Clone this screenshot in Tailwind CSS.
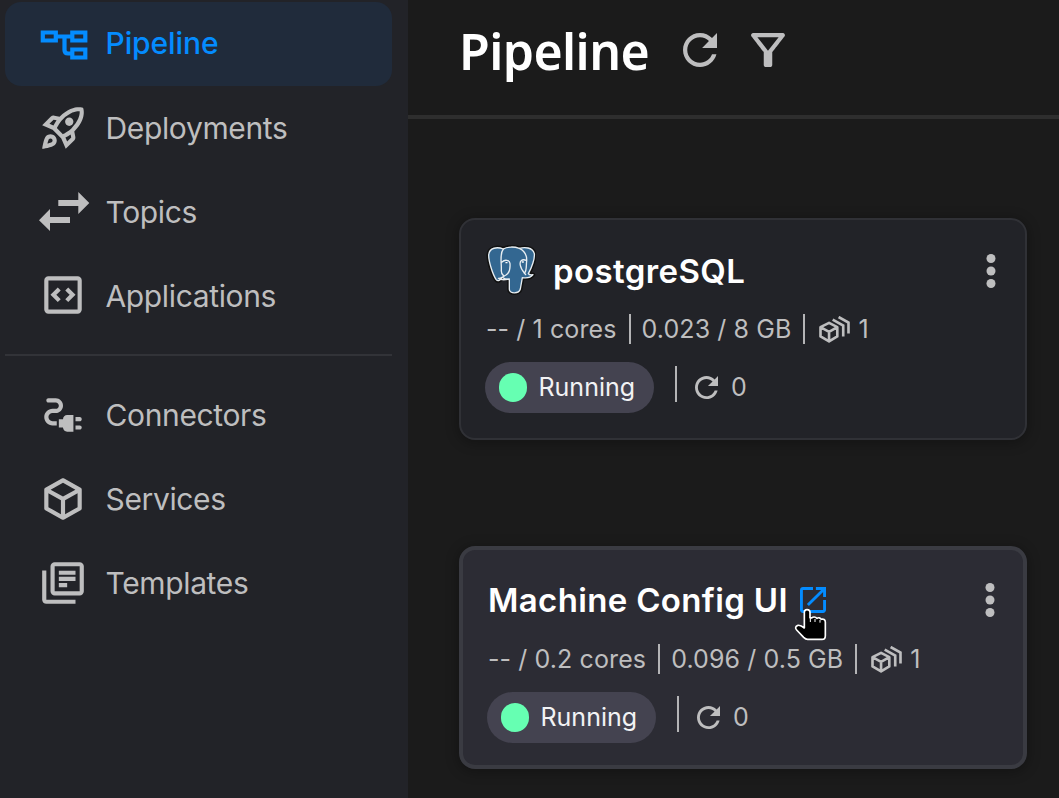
<!DOCTYPE html>
<html lang="en">
<head>
<meta charset="utf-8">
<title>Pipeline</title>
<script src="https://cdn.jsdelivr.net/npm/@tailwindcss/browser@4"></script>
</head>
<body class="h-[798px] w-[1059px] overflow-hidden bg-[#1b1b1b] font-['Inter',sans-serif] text-[#bebebf]">
<svg class="hidden">
  <symbol id="refresh" viewBox="4 4 16 16"><path fill="currentColor" d="M17.65 6.35C16.2 4.9 14.21 4 12 4c-4.42 0-7.99 3.58-7.99 8s3.57 8 7.99 8c3.73 0 6.84-2.55 7.73-6h-2.08c-.82 2.33-3.04 4-5.65 4-3.31 0-6-2.69-6-6s2.69-6 6-6c1.66 0 3.14.69 4.22 1.78L13 11h7V4l-2.35 2.35z"/></symbol>
  <symbol id="pods" viewBox="0 0 93 82"><g fill="none" stroke="currentColor" stroke-width="8"><path stroke-linejoin="round" d="M30 21 55 34V62L30 77 4 62V34ZM4 34 30 48 55 34M30 48V77"/><path d="M41 11 73 29V62M59 3 89 20V53"/></g></symbol>
</svg>
<div class="flex h-full">
  <aside class="flex w-[408px] shrink-0 flex-col bg-[#222328] pt-[2px] pr-4 pl-[5px]">
    <nav class="flex flex-col text-[30px] leading-[82px] tracking-[-0.36px]">
      <a class="flex h-[84px] items-center gap-[16px] rounded-2xl bg-[#202b3b] pl-[32.5px] font-medium text-[#048cff]">
        <svg class="h-[50px] w-[52px]" viewBox="0 0 52 50"><g fill="none" stroke="currentColor" stroke-width="4.200"><path d="M4.800 13.500h13v8h-13zM34.300 13.500h13v8h-13zM34.300 30.500h13v8h-13zM18 17.500h16M26.500 18v13q0 3.500 3.500 3.500h4"/></g></svg>
        <span class="mb-[2px] tracking-[-0.1px]">Pipeline</span>
      </a>
      <a class="flex h-[84px] items-center gap-[16.5px] pl-[32px]">
        <svg class="h-[50px] w-[52px]" viewBox="0 0 24 24"><path fill="currentColor" d="M6 15c-.83 0-1.58.34-2.120.88C2.700 17.060 2 22 2 22s4.940-.7 6.120-1.880C8.660 19.580 9 18.830 9 18c0-1.660-1.340-3-3-3zm.71 3.710c-.28.28-2.170.76-2.170.76s.47-1.880.76-2.170c.17-.19.42-.3.7-.3.55 0 1 .45 1 1 0 .28-.11.53-.29.71zm10.710-5.060c6.360-6.360 4.240-11.310 4.240-11.310S16.710.22 10.350 6.580l-2.490-.5c-.65-.13-1.330.08-1.810.55L2 10.690l5 2.140L11.170 17l2.140 5 4.050-4.050c.47-.47.68-1.150.55-1.810l-.49-2.490zM7.410 10.830l-1.910-.82 1.970-1.970 1.440.29c-.57.83-1.080 1.700-1.500 2.500zm6.580 7.670l-.82-1.910c.8-.42 1.670-.93 2.490-1.500l.29 1.440-1.960 1.970zM16 12.240c-1.320 1.320-3.380 2.400-4.040 2.730l-2.930-2.930c.32-.65 1.400-2.710 2.730-4.040 4.680-4.680 8.230-3.990 8.230-3.990s.69 3.550-3.990 8.230zM15 11c1.100 0 2-.9 2-2s-.9-2-2-2-2 .9-2 2 .9 2 2 2z"/></svg>
        <span>Deployments</span>
      </a>
      <a class="flex h-[84px] items-center gap-[16px] pl-[32.5px]">
        <svg class="h-[50px] w-[52px]" viewBox="0 0 52 50"><path fill="currentColor" d="M20.300 13h20V5l11 11-11 11v-8h-20zM32 30v6H12v8L1 33.200 12 22v8z"/></svg>
        <span>Topics</span>
      </a>
      <a class="flex h-[84px] items-center gap-[16.5px] pl-[32px]">
        <svg class="mb-[2px] h-[50px] w-[52px]" viewBox="0 0 24 24"><g fill="none" stroke="currentColor" stroke-width="2"><rect x="4" y="4" width="16" height="16" rx="1"/><path d="M10.200 9.100 7.400 11.900l2.800 2.800M13.800 9.100l2.800 2.800-2.800 2.800"/></g></svg>
        <span>Applications</span>
      </a>
      <div class="mt-[16px] mb-[17px] h-[2px] bg-[#323338]"></div>
      <a class="flex h-[84px] items-center gap-[16.5px] pl-[32px]">
        <svg class="h-[50px] w-[52px]" viewBox="0 0 24 24"><path fill="currentColor" d="M21 14c0-.55-.45-1-1-1h-2v2h2c.55 0 1-.45 1-1zM20 17h-2v2h2c.55 0 1-.45 1-1s-.45-1-1-1zM12 14h-2v4h2c0 1.100.9 2 2 2h3v-8h-3c-1.100 0-2 .9-2 2zM5 13c0-1.100.9-2 2-2h1.500c1.930 0 3.500-1.570 3.500-3.500S10.430 4 8.500 4H5c-.55 0-1 .45-1 1s.45 1 1 1h3.500c.83 0 1.500.67 1.500 1.500S9.330 9 8.500 9H7c-2.210 0-4 1.790-4 4s1.790 4 4 4h2v-2H7c-1.100 0-2-.9-2-2z"/></svg>
        <span>Connectors</span>
      </a>
      <a class="flex h-[84px] items-center gap-[16.5px] pl-[32px]">
        <svg class="h-[50px] w-[52px]" viewBox="0 0 24 24"><path fill="currentColor" d="M21 16.500C21 16.880 20.790 17.210 20.470 17.380L12.570 21.820C12.410 21.940 12.210 22 12 22 11.790 22 11.590 21.940 11.430 21.820L3.530 17.380C3.210 17.210 3 16.880 3 16.500V7.500C3 7.120 3.210 6.790 3.530 6.620L11.430 2.180C11.590 2.060 11.790 2 12 2 12.210 2 12.410 2.060 12.570 2.180L20.470 6.620C20.790 6.790 21 7.120 21 7.500V16.500M12 4.150 6.040 7.500 12 10.850 17.960 7.500 12 4.150M5 15.910 11 19.290V12.580L5 9.210V15.910M19 15.910V9.210L13 12.580V19.290L19 15.910Z"/></svg>
        <span>Services</span>
      </a>
      <a class="flex h-[84px] items-center gap-[16.5px] pl-[32px]">
        <svg class="h-[50px] w-[52px]" viewBox="0 0 24 24"><path fill="currentColor" d="M4 6H2v14c0 1.100.9 2 2 2h14v-2H4zM10 6.100h8V8h-8zM10 9h8v2h-8zM10 12h4v2h-4z"/><rect x="7" y="3" width="14" height="14" rx="1" fill="none" stroke="currentColor" stroke-width="2"/></svg>
        <span>Templates</span>
      </a>
    </nav>
  </aside>

  <main class="flex flex-1 flex-col">
    <header class="flex h-[119px] shrink-0 items-start border-b-4 border-[#2e2e2e] pl-[51px]">
      <h1 class="mt-[16px] w-[224px] font-['Noto_Sans',sans-serif] text-[50px] leading-[70px] font-semibold tracking-[-0.6px] text-white">Pipeline</h1>
      <svg class="mt-[33px] size-[34px]"><use href="#refresh"/></svg>
      <svg class="mt-[33px] ml-[34px] size-[34px]" viewBox="4 4 16 16"><path fill="currentColor" d="M7 6h10l-5.010 6.300L7 6zm-2.750-.39C6.270 8.200 10 13 10 13v6c0 .55.45 1 1 1h2c.55 0 1-.45 1-1v-6s3.720-4.800 5.740-7.390A.998.998 0 0 0 18.950 4H5.040c-.83 0-1.300.95-.79 1.610z"/></svg>
    </header>

    <section class="mt-[99px] ml-[51px] h-[222px] w-[568px] shrink-0 rounded-2xl border-2 border-[#303136] bg-[#222328] px-[25px] pt-[25px] shadow-[0_2px_12px_2px_rgba(0,0,0,0.25)]">
      <div class="flex h-[52px] items-center">
        <svg class="mb-[2px] -ml-[0.5px] size-[50px]" viewBox="18 15 150 150">
          <g stroke-linejoin="round" stroke-linecap="round">
            <path fill="#336791" stroke="#111" stroke-width="13" d="M70 27C52 20 28 22 26 45c0 20 12 58 22 73 6 8 13 3 18-6 5 4 10 6 22 7v29c0 14 29 14 33-1l6-34c12 2 26-1 32-9-7 1-12 1-14-3 10-17 20-46 18-60-5-20-30-20-45-16-14-5-35-6-48 2Z"/>
            <path fill="#336791" stroke="#e8eef2" stroke-width="4" d="M70 27C52 20 28 22 26 45c0 20 12 58 22 73 6 8 13 3 18-6 5 4 10 6 22 7v29c0 14 29 14 33-1l6-34c12 2 26-1 32-9-7 1-12 1-14-3 10-17 20-46 18-60-5-20-30-20-45-16-14-5-35-6-48 2Z"/>
            <path fill="none" stroke="#e8eef2" stroke-width="4" d="M70 27C58 42 65 68 64 89q-1 12 6 17M66 66c8-8 23-7 24 5 1 16-2 28-12 34-8 4-14 12-23 10 8 6 20 5 33 2M118 25c19 9 23 22 22 38-2 15 1 29-7 37M139 61c-13-5-21 2-18 15 2 12 10 20 16 28"/>
            <path stroke="#fff" stroke-width="4" d="M78 68h3M127 66h3"/>
          </g>
        </svg>
        <h2 class="mb-px ml-[17.5px] text-[33px] leading-[40px] font-semibold tracking-[0.4px] text-white">postgreSQL</h2>
        <svg class="mr-[4px] mb-px ml-auto h-[36px] w-[10px]" viewBox="0 0 10 36"><g fill="currentColor"><circle cx="5" cy="5.500" r="4.500"/><circle cx="5" cy="18" r="4.500"/><circle cx="5" cy="30.500" r="4.500"/></g></svg>
      </div>
      <div class="mt-[16px] flex h-[32px] items-center text-[25px] leading-[32px] tracking-[0.1px]">
        <span>-- / 1 cores</span><i class="mr-[11px] ml-[12px] h-[30px] w-[2px] bg-[#b4b4b6]"></i><span>0.023 / 8 GB</span><i class="mr-[14px] ml-[12px] h-[30px] w-[2px] bg-[#b4b4b6]"></i>
        <svg class="mr-[8px] h-[27px] w-[31px]"><use href="#pods"/></svg><span>1</span>
      </div>
      <div class="mt-[17px] -ml-px flex h-[51px] items-start text-[25px] leading-[51px]">
        <div class="flex h-[51px] w-[169px] items-center rounded-full bg-[#444350] pl-[13.5px] text-[#f2f2f4]"><i class="mr-[11.5px] size-[28.5px] rounded-full bg-[#66ffb2]"></i>Running</div>
        <i class="mt-[4px] ml-[21px] h-[36px] w-[2px] bg-[#b4b4b6]"></i>
        <svg class="mt-[14px] ml-[17.5px] size-[23px]"><use href="#refresh"/></svg>
        <span class="ml-[13.5px]">0</span>
      </div>
    </section>

    <section class="mt-[106px] ml-[51px] h-[223px] w-[568px] shrink-0 rounded-2xl border-4 border-[#3a3b42] bg-[#2c2c34] px-[25px] pt-[25px] shadow-[0_2px_12px_2px_rgba(0,0,0,0.25)]">
      <div class="flex h-[52px] items-center">
        <h2 class="mb-[2px] text-[33px] leading-[40px] font-semibold tracking-[0.34px] text-white">Machine Config UI</h2>
        <div class="relative mb-[2px] ml-[12px] size-[26px] text-[#048cff]">
          <svg class="size-[26px]" viewBox="3 3 18 18"><path fill="currentColor" d="M19 19H5V5h7V3H5c-1.110 0-2 .9-2 2v14c0 1.100.89 2 2 2h14c1.100 0 2-.9 2-2v-7h-2v7zM14 3v2h3.590l-9.830 9.830 1.410 1.410L19 6.410V10h2V3h-7z"/></svg>
          <svg class="absolute top-[21px] -left-[6px] h-[34px] w-[34px]" viewBox="102 205 102 102"><path fill="#000" stroke="#fff" stroke-width="5" stroke-linejoin="round" d="M141 210c-6 0-8 4-8 8v47c-6-5-12-9-19-8-8 2-9 9-4 14l21 22c4 4 7 6 12 6h43c6 0 10-5 10-11v-41c0-7-6-10-12-8-3-5-9-6-13-3-5-5-12-5-16-1-3-2-4-2-5-1v-16c0-4-3-8-9-8Z"/><path stroke="#fff" stroke-width="3" d="M151 234v13M165 238v9M180 241v8"/></svg>
        </div>
        <svg class="mr-[3.5px] mb-[2px] ml-auto h-[36px] w-[10px]" viewBox="0 0 10 36"><g fill="currentColor"><circle cx="5" cy="5.500" r="4.500"/><circle cx="5" cy="18" r="4.500"/><circle cx="5" cy="30.500" r="4.500"/></g></svg>
      </div>
      <div class="mt-[16px] flex h-[32px] items-center text-[25px] leading-[32px] tracking-[0.1px]">
        <span>-- / 0.2 cores</span><i class="mr-[11px] ml-[12px] h-[30px] w-[2px] bg-[#b4b4b6]"></i><span>0.096 / 0.5 GB</span><i class="mr-[14px] ml-[12px] h-[30px] w-[2px] bg-[#b4b4b6]"></i>
        <svg class="mr-[8px] h-[27px] w-[31px]"><use href="#pods"/></svg><span>1</span>
      </div>
      <div class="mt-[17px] -ml-px flex h-[51px] items-start text-[25px] leading-[51px]">
        <div class="flex h-[51px] w-[169px] items-center rounded-full bg-[#444350] pl-[13.5px] text-[#f2f2f4]"><i class="mr-[11.5px] size-[28.5px] rounded-full bg-[#66ffb2]"></i>Running</div>
        <i class="mt-[4px] ml-[21px] h-[36px] w-[2px] bg-[#b4b4b6]"></i>
        <svg class="mt-[13.5px] ml-[17.5px] size-[23px]"><use href="#refresh"/></svg>
        <span class="ml-[13.5px]">0</span>
      </div>
    </section>
  </main>
</div>
</body>
</html>
